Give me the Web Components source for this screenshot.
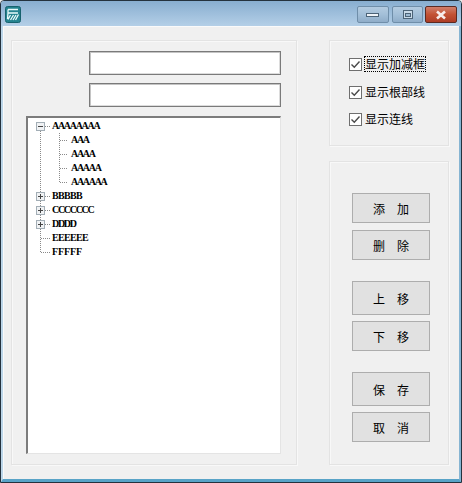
<!DOCTYPE html>
<html>
<head>
<meta charset="utf-8">
<title>Tree options</title>
<style>
html, body { margin: 0; padding: 0; width: 462px; height: 483px; overflow: hidden; background: #f0f0f0; }
</style>
</head>
<body>
<app-window>
  <group-box slot="left" class="tree-group">
    <div style="display:flex;flex-direction:column;align-items:flex-end;gap:8px;margin:10px 15px 9px 0;">
      <text-field></text-field>
      <text-field></text-field>
    </div>
    <tree-view style="margin:0 15px 10px 14px;">
      <tree-row kind="open" label="AAAAAAAA" track="-1.3"></tree-row>
      <tree-row kind="child" label="AAA" track="-1.3"></tree-row>
      <tree-row kind="child" label="AAAA" track="-1.3"></tree-row>
      <tree-row kind="child" label="AAAAA" track="-1.3"></tree-row>
      <tree-row kind="child-last" label="AAAAAA" track="-1.3"></tree-row>
      <tree-row kind="closed" label="BBBBB" track="-0.67"></tree-row>
      <tree-row kind="closed" label="CCCCCCC" track="-1.3"></tree-row>
      <tree-row kind="closed" label="DDDD" track="-1.3"></tree-row>
      <tree-row kind="leaf" label="EEEEEE" track="-0.67"></tree-row>
      <tree-row kind="leaf-last" label="FFFFF" track="-0.11"></tree-row>
    </tree-view>
  </group-box>
  <group-box slot="options" style="flex:none;height:106px;">
    <div style="display:flex;flex-direction:column;gap:8px;padding:13px 0 0 19px;">
      <check-row focused>显示加减框</check-row>
      <check-row>显示根部线</check-row>
      <check-row style="margin-top:-1px;">显示连线</check-row>
    </div>
  </group-box>
  <group-box slot="actions">
    <div style="display:flex;flex-direction:column;align-items:flex-start;padding:31px 0 0 22px;">
      <push-button>添  加</push-button>
      <push-button style="margin-top:7px;">删  除</push-button>
      <push-button style="margin-top:21px;height:34px;">上  移</push-button>
      <push-button style="margin-top:6px;">下  移</push-button>
      <push-button style="margin-top:21px;height:34px;">保  存</push-button>
      <push-button style="margin-top:6px;">取  消</push-button>
    </div>
  </group-box>
</app-window>

<script>
// The window frame with its title bar and the two columns.
customElements.define('app-window',
  class extends HTMLElement {
    constructor () {
      super()
      this.attachShadow({ mode: 'open' }).innerHTML = `
<style>
:host {
  display: flex;
  flex-direction: column;
  width: 462px;
  height: 483px;
  box-sizing: border-box;
  background: #f0f0f0;
  border: 1px solid #24323e;
  border-radius: 4px 4px 0 0;
  font-family: "Liberation Sans", "Noto Sans CJK SC", sans-serif;
  overflow: hidden;
}
#title {
  flex: none;
  display: flex;
  align-items: flex-start;
  justify-content: space-between;
  height: 25px;
  padding: 5px 4px 0 4px;
  box-sizing: border-box;
  background: linear-gradient(#88aed0, #b4cfe7);
}
#caption { display: flex; gap: 3px; }
.cap {
  display: flex;
  align-items: center;
  justify-content: center;
  box-sizing: border-box;
  width: 32px;
  height: 17px;
  border: 1px solid #6f8ea9;
  border-radius: 2px;
  background: linear-gradient(#b3cbe0, #a3bfd8 50%, #8fadc9);
}
.cap.max { width: 31px; margin-right: -1px; }
.cap.close { border-color: #5b2a22; background: linear-gradient(#d07f6b, #c35234 50%, #ad3d26); }
#frame {
  flex: 1;
  min-height: 0;
  display: flex;
  border-style: solid;
  border-width: 0 2px 3px 2px;
  border-color: #bcd6e9 #86b5d3 #58a3c7 #bcd6e9;
}
#body {
  flex: 1;
  min-height: 0;
  display: flex;
  gap: 32px;
  padding: 14px 0 14px 8px;
  background: #f0f0f0;
  box-shadow: inset 0 1px 0 #fafafa, inset 1px 0 0 #fafafa;
}
#left { display: flex; width: 286px; }
#right { display: flex; flex-direction: column; gap: 15px; width: 120px; }
</style>
<div id="title">
  <svg width="16" height="17" viewBox="0 0 16 17">
    <rect x="0.500" y="0.500" width="15" height="16" rx="2" fill="#24838f" stroke="#17626e"/>
    <path d="M3 3.500H13M3 3.500V7H13M3 7 2.500 13M5.500 9 3 13.500M8.500 9 5.500 14M11 9 8 14M13.500 8.500 10.500 14" fill="none" stroke="#e9fbfb" stroke-width="1.300"/>
  </svg>
  <div id="caption">
    <div class="cap"><svg width="14" height="7"><rect x="0.500" y="2.500" width="12" height="3" fill="#eef3f8" stroke="#4c6377"/></svg></div>
    <div class="cap max"><svg width="12" height="10"><rect x="1.500" y="0.500" width="9" height="8" fill="#c9dae8" stroke="#4c6377"/><rect x="3.500" y="3.500" width="5" height="3" fill="#9dbad3" stroke="#4c6377"/></svg></div>
    <div class="cap close"><svg width="14" height="10"><path d="M3 1.500 11 8.500M11 1.500 3 8.500" stroke="#f7ecea" stroke-width="2.600"/></svg></div>
  </div>
</div>
<div id="frame">
  <div id="body">
    <div id="left"><slot name="left"></slot></div>
    <div id="right"><slot name="options"></slot><slot name="actions"></slot></div>
  </div>
</div>
`
    }
  }
)

// Plain etched panel.
customElements.define('group-box',
  class extends HTMLElement {
    constructor () {
      super()
      this.attachShadow({ mode: 'open' }).innerHTML = `
<style>
:host {
  display: flex;
  flex-direction: column;
  flex: 1;
  box-sizing: border-box;
  border: 1px solid #e3e3e3;
  box-shadow: inset 1px 1px 0 #f8f8f8, 1px 1px 0 #f8f8f8;
  background: #f0f0f0;
}
</style>
<slot></slot>
`
    }
  }
)

// Empty single line edit box.
customElements.define('text-field',
  class extends HTMLElement {
    constructor () {
      super()
      this.attachShadow({ mode: 'open' }).innerHTML = `
<style>
:host {
  display: block;
  width: 192px;
  height: 24px;
  box-sizing: border-box;
  background: #fff;
  border: 1px solid #7a7a7a;
  box-shadow: inset 1px 1px 0 #c4c4c4, inset -1px -1px 0 #dcdcdc;
}
</style>
`
    }
  }
)

// Sunken list that holds the tree rows.
customElements.define('tree-view',
  class extends HTMLElement {
    constructor () {
      super()
      this.attachShadow({ mode: 'open' }).innerHTML = `
<style>
:host {
  display: block;
  flex: 1;
  box-sizing: border-box;
  padding-top: 1px;
  background: #fff;
  border-style: solid;
  border-width: 2px 1px 1px 2px;
  border-color: #7c7c7c #e4e4e4 #e4e4e4 #7c7c7c;
}
</style>
<slot></slot>
`
    }
  }
)

// One tree line: connector drawing and label.
customElements.define('tree-row',
  class extends HTMLElement {
    constructor () {
      super()
      const kind = this.getAttribute('kind')
      const isChild = kind.startsWith('child')
      const dots = 'stroke="#8a8a8a" stroke-dasharray="1 1" fill="none"'
      let art = ''

      // The root line runs on past every row except the last.
      if (kind !== 'leaf-last') {
        art += `<path d="M12.500 ${kind === 'open' ? 10 : 0}V14" ${dots}/>`
      } else {
        art += `<path d="M12.500 0V7" ${dots}/>`
      }
      if (isChild) {
        art += `<path d="M31.500 0V${kind === 'child' ? 14 : 7}M32 7.500H39" ${dots}/>`
      } else {
        art += `<path d="M13 7.500H23" ${dots}/>`
      }
      if (kind === 'open' || kind === 'closed') {
        art += `<rect x="8.500" y="3.500" width="8" height="8" fill="#f0f2f4" stroke="#a3aeb6"/>
          <path d="M10 7.500H15${kind === 'closed' ? 'M12.500 5V10' : ''}" stroke="#444"/>`
      }

      this.attachShadow({ mode: 'open' }).innerHTML = `
<style>
:host { display: flex; height: 14px; align-items: center; }
svg { flex: none; }
span {
  font: bold 10px "Liberation Serif", serif;
  letter-spacing: ${this.getAttribute('track')}px;
  margin-bottom: 2px;
  color: #000;
  white-space: pre;
}
</style>
<svg width="${isChild ? 43 : 24}" height="14">${art}</svg>
<span>${this.getAttribute('label')}</span>
`
    }
  }
)

// Checked box with its text, the first one carries the focus rectangle.
customElements.define('check-row',
  class extends HTMLElement {
    constructor () {
      super()
      this.attachShadow({ mode: 'open' }).innerHTML = `
<style>
:host {
  display: flex;
  align-items: center;
  gap: 3px;
  height: 20px;
  font: 12px "Noto Sans CJK SC", sans-serif;
  color: #000;
}
svg { flex: none; }
span { line-height: 14px; }
:host([focused]) span { outline: 1px dotted #000; }
</style>
<svg width="13" height="13" viewBox="0 0 13 13">
  <rect x="0.500" y="0.500" width="12" height="12" fill="#fff" stroke="#6f6f6f"/>
  <path d="M2.500 6.500 5.300 9.300 10.500 3.500" fill="none" stroke="#4a4a4a" stroke-width="1.400"/>
</svg>
<span><slot></slot></span>
`
    }
  }
)

// Flat grey command button.
customElements.define('push-button',
  class extends HTMLElement {
    constructor () {
      super()
      this.attachShadow({ mode: 'open' }).innerHTML = `
<style>
:host {
  display: flex;
  align-items: center;
  justify-content: center;
  width: 78px;
  height: 30px;
  box-sizing: border-box;
  background: #e1e1e1;
  border: 1px solid #adadad;
  font: 12px "Noto Sans CJK SC", sans-serif;
  white-space: pre;
  word-spacing: 3.300px;
  color: #000;
}
</style>
<slot></slot>
`
    }
  }
)
</script>
</body>
</html>
